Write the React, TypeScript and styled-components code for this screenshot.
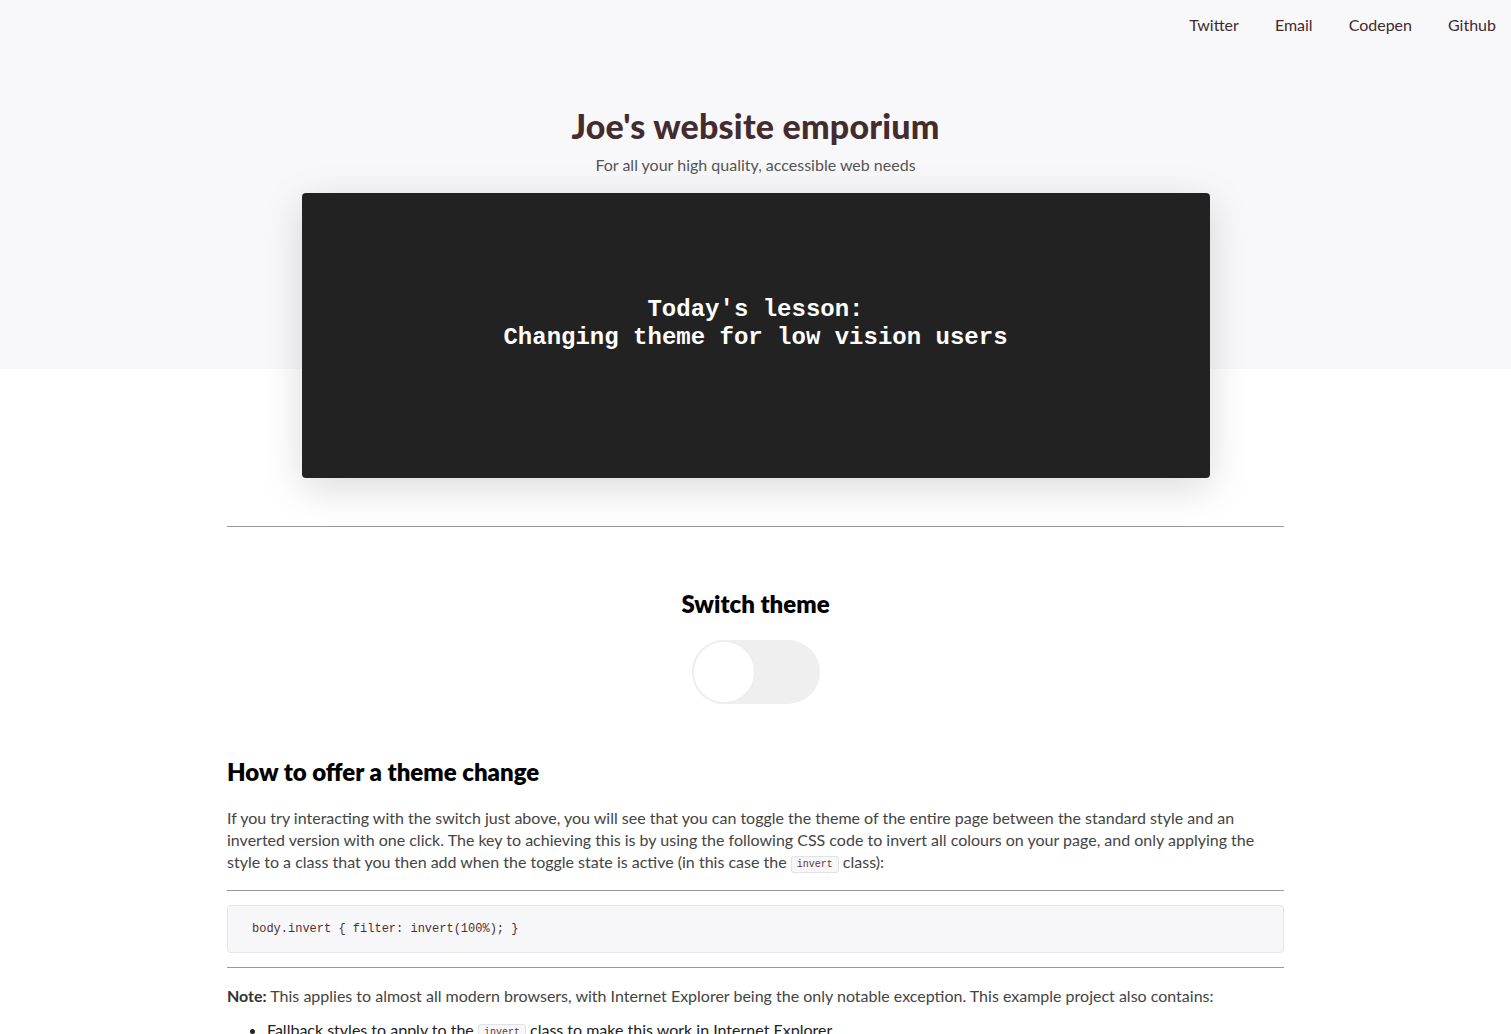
import React, { useState } from "react";
import styled, { createGlobalStyle } from "styled-components";

const Global = createGlobalStyle`
  html, body { margin: 0; padding: 0; }
  body {
    font-family: Lato, "Open Sans", sans-serif;
    background: #fff;
    color: #444;
  }
  * { box-sizing: border-box; }
`;

const Header = styled.header`
  background: linear-gradient(#f8f8fa 0, #f8f8fa 369px, #fff 369px);
  display: flex;
  flex-direction: column;
  align-items: center;
`;

const Nav = styled.nav`
  align-self: stretch;
  display: flex;
  justify-content: flex-end;
  gap: 36px;
  padding: 15px 15px 0 0;
  height: 56px;
`;

const NavLink = styled.a`
  font-size: 16px;
  line-height: 20px;
  color: #3f2a2e;
  text-decoration: none;
`;

const Title = styled.h1`
  margin: 48px 0 0;
  font-family: Lato, sans-serif;
  font-weight: 900;
  font-size: 34px;
  line-height: 44px;
  color: #442b2e;
  letter-spacing: 0.2px;
`;

const Subtitle = styled.p`
  margin: 7px 0 0;
  font-size: 16px;
  line-height: 20px;
  color: #555;
`;

const Lesson = styled.div`
  margin-top: 18px;
  width: 908px;
  height: 285px;
  background: #222;
  border-radius: 4px;
  box-shadow: 0 10px 40px rgba(0, 0, 0, 0.15);
  display: flex;
  flex-direction: column;
  align-items: center;
  justify-content: center;
  padding-bottom: 24px;
  font-family: "Liberation Mono", "Courier New", monospace;
  font-weight: bold;
  font-size: 24px;
  line-height: 28px;
  color: #fff;
  text-align: center;
`;

const Main = styled.main`
  width: 1057px;
  margin: 0 auto;
  padding-top: 48px;
`;

const Rule = styled.hr<{ $top?: number; $bottom?: number }>`
  border: none;
  border-top: 1px solid #999;
  margin: ${(p) => p.$top ?? 14}px 0 ${(p) => p.$bottom ?? 14}px;
`;

const SwitchSection = styled.section`
  display: flex;
  flex-direction: column;
  align-items: center;
  padding-top: 61px;
`;

const H2 = styled.h2<{ $center?: boolean }>`
  margin: 0;
  font-size: 24px;
  line-height: 32px;
  font-weight: 800;
  color: #000;
  text-align: ${(p) => (p.$center ? "center" : "left")};
`;

const Toggle = styled.button<{ $on: boolean }>`
  margin-top: 20px;
  width: 128px;
  height: 64px;
  border-radius: 32px;
  border: none;
  background: ${(p) => (p.$on ? "#5a5" : "#efefef")};
  padding: 0;
  display: flex;
  justify-content: ${(p) => (p.$on ? "flex-end" : "flex-start")};
  cursor: pointer;
`;

const Knob = styled.span`
  width: 64px;
  height: 64px;
  border-radius: 50%;
  background: #fff;
  border: 2px solid #eee;
`;

const Article = styled.section`
  padding-top: 52px;
`;

const Para = styled.p<{ $top?: number }>`
  margin: ${(p) => p.$top ?? 19}px 0 0;
  font-size: 16px;
  line-height: 22px;
  color: #444;
`;

const InlineCode = styled.code`
  font-family: "Liberation Mono", monospace;
  font-size: 10px;
  line-height: 14px;
  color: #6b2f3a;
  background: #f7f7f9;
  border: 1px solid #e1e1e8;
  border-radius: 3px;
  padding: 2px 5px;
  vertical-align: 1px;
`;

const CodeBlock = styled.pre`
  margin: 0;
  height: 48px;
  display: flex;
  align-items: center;
  padding: 0 24px;
  background: #f7f7f9;
  border: 1px solid #e6e6ea;
  border-radius: 4px;
  font-family: "Liberation Mono", monospace;
  font-size: 12px;
  color: #4d2f33;
`;

const Strong = styled.strong`
  font-weight: 700;
  color: #333;
`;

const List = styled.ul`
  margin: 12px 0 0;
  padding-left: 40px;
  font-size: 16px;
  line-height: 22px;
  color: #222;
`;

export default function App() {
  const [on, setOn] = useState(false);
  return (
    <>
      <Global />
      <Header>
        <Nav>
          <NavLink href="#">Twitter</NavLink>
          <NavLink href="#">Email</NavLink>
          <NavLink href="#">Codepen</NavLink>
          <NavLink href="#">Github</NavLink>
        </Nav>
        <Title>Joe's website emporium</Title>
        <Subtitle>For all your high quality, accessible web needs</Subtitle>
        <Lesson>
          <div>Today's lesson:</div>
          <div>Changing theme for low vision users</div>
        </Lesson>
      </Header>
      <Main>
        <Rule $top={0} $bottom={0} />
        <SwitchSection>
          <H2 $center>Switch theme</H2>
          <Toggle $on={on} onClick={() => setOn(!on)} aria-label="Switch theme">
            <Knob />
          </Toggle>
        </SwitchSection>
        <Article>
          <H2>How to offer a theme change</H2>
          <Para>
            If you try interacting with the switch just above, you will see that you can toggle the theme of the
            entire page between the standard style and an inverted version with one click. The key to achieving
            this is by using the following CSS code to invert all colours on your page, and only applying the style
            to a class that you then add when the toggle state is active (in this case the{" "}
            <InlineCode>invert</InlineCode> class):
          </Para>
          <Rule $top={17} $bottom={14} />
          <CodeBlock>body.invert {"{"} filter: invert(100%); {"}"}</CodeBlock>
          <Rule $top={14} $bottom={14} />
          <Para $top={17}>
            <Strong>Note:</Strong> This applies to almost all modern browsers, with Internet Explorer being the only
            notable exception. This example project also contains:
          </Para>
          <List>
            <li>
              Fallback styles to apply to the <InlineCode>invert</InlineCode> class to make this work in Internet
              Explorer
            </li>
          </List>
        </Article>
      </Main>
    </>
  );
}
